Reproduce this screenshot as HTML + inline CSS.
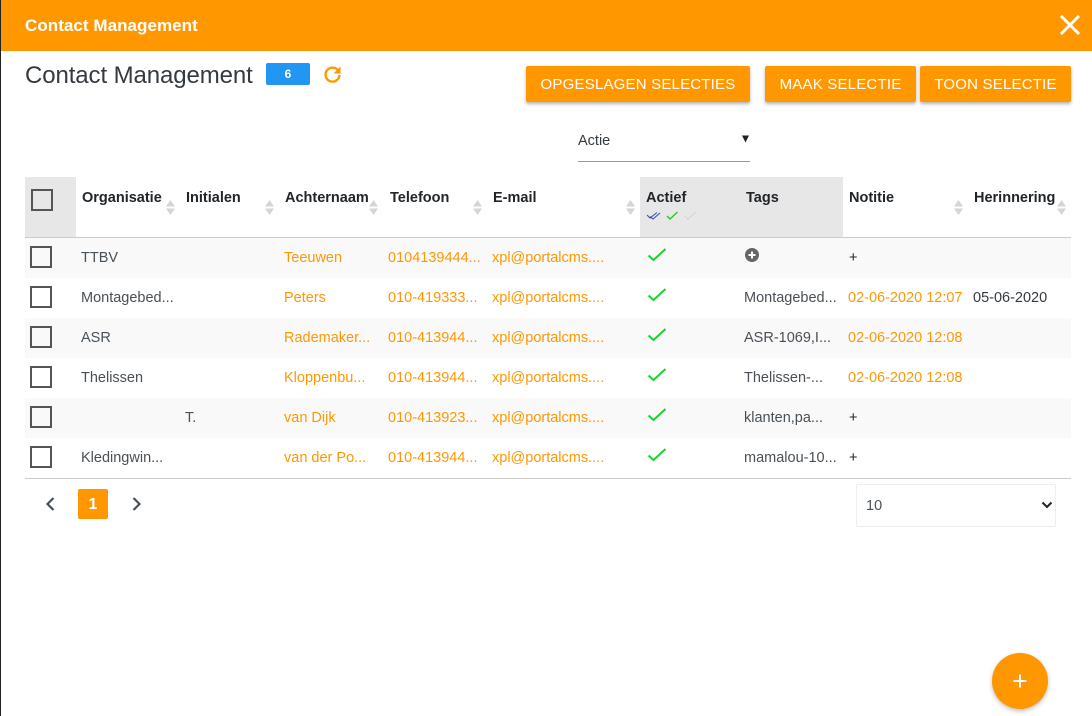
<!DOCTYPE html>
<html><head><meta charset="utf-8">
<style>
html,body{margin:0;padding:0;background:#fff}
body{width:1092px;height:716px;overflow:hidden;position:relative;font-family:"Liberation Sans",sans-serif;color:#495057;font-size:14.5px}
.a{position:absolute;white-space:nowrap}
.bar{left:1px;top:0;width:1091px;height:51px;background:#ff9800}
.strip{left:0;top:0;width:1px;height:716px;background:#222}
.btn{background:#ff9800;color:#fff;height:36px;line-height:38px;border-radius:2px;text-align:center;font-size:15px;letter-spacing:.2px;box-shadow:0 2px 3px rgba(0,0,0,.3)}
.th{font-weight:bold;color:#212529;line-height:20px;top:188px;font-size:14.5px}
.td{line-height:20px;font-size:14.5px;color:#495057}
.o{color:#ff9800}
.row{left:25px;width:1046px;height:40px}
.cb{width:18px;height:18px;border:2px solid #555;left:30px;box-sizing:content-box;background:transparent}
.sort{width:9px;height:15px}
</style></head><body>
<div class="a strip"></div>
<div class="a bar"></div>
<div class="a" style="left:25px;top:16px;line-height:20px;color:#fff;font-size:17px;font-weight:bold;letter-spacing:.05px">Contact Management</div>
<svg class="a" style="left:1058px;top:13px" width="24" height="24" viewBox="0 0 24 24"><path d="M3 3L21 21M21 3L3 21" stroke="#fff" stroke-width="3" fill="none"/></svg>

<div class="a" style="left:25px;top:62px;line-height:28px;font-size:24px;letter-spacing:-.1px;color:#343a40">Contact Management</div>
<div class="a" style="left:266px;top:63px;width:44px;height:22px;background:#2196f3;border-radius:2px;color:#fff;font-size:12px;font-weight:bold;text-align:center;line-height:22px">6</div>
<svg class="a" style="left:322px;top:64px" width="21" height="21" viewBox="0 0 21 21"><path d="M16.6 7.2A7 7 0 1 0 17.5 11" stroke="#ff9800" stroke-width="2.4" fill="none"/><path d="M18.5 2.5V9.5H11.5Z" fill="#ff9800"/></svg>

<div class="a btn" style="left:526px;top:66px;width:224px">OPGESLAGEN SELECTIES</div>
<div class="a btn" style="left:765px;top:66px;width:151px">MAAK SELECTIE</div>
<div class="a btn" style="left:920px;top:66px;width:151px">TOON SELECTIE</div>

<div class="a td" style="left:578px;top:131px;color:#343a40">Actie</div>
<svg class="a" style="left:741px;top:135px" width="9" height="8"><path d="M1 0.5H8L4.5 7.5Z" fill="#222"/></svg>
<div class="a" style="left:578px;top:161px;width:172px;height:1px;background:#999"></div>

<div class="a" style="left:25px;top:177px;width:51px;height:60px;background:#e7e7e7"></div>
<div class="a" style="left:640px;top:177px;width:203px;height:60px;background:#e7e7e7"></div>
<div class="a" style="left:25px;top:237px;width:1046px;height:1px;background:#ccc"></div>
<div class="a" style="left:25px;top:478px;width:1046px;height:1px;background:#ccc"></div>
<div class="a row" style="top:238px;background:#f9f9f9"></div>
<div class="a row" style="top:318px;background:#f9f9f9"></div>
<div class="a row" style="top:398px;background:#f9f9f9"></div>

<div class="a cb" style="left:31px;top:189px"></div>
<div class="a th" style="left:82px">Organisatie</div>
<div class="a th" style="left:186px">Initialen</div>
<div class="a th" style="left:285px">Achternaam</div>
<div class="a th" style="left:390px">Telefoon</div>
<div class="a th" style="left:493px">E-mail</div>
<div class="a th" style="left:646px">Actief</div>
<div class="a th" style="left:746px">Tags</div>
<div class="a th" style="left:849px">Notitie</div>
<div class="a th" style="left:974px">Herinnering</div>

<svg class="a sort" style="left:166px;top:200px" viewBox="0 0 9 15"><path d="M4.5 0L9 6.5H0ZM0 8.5H9L4.5 15Z" fill="#d5d5d5"/></svg>
<svg class="a sort" style="left:265px;top:200px" viewBox="0 0 9 15"><path d="M4.5 0L9 6.5H0ZM0 8.5H9L4.5 15Z" fill="#d5d5d5"/></svg>
<svg class="a sort" style="left:369px;top:200px" viewBox="0 0 9 15"><path d="M4.5 0L9 6.5H0ZM0 8.5H9L4.5 15Z" fill="#d5d5d5"/></svg>
<svg class="a sort" style="left:473px;top:200px" viewBox="0 0 9 15"><path d="M4.5 0L9 6.5H0ZM0 8.5H9L4.5 15Z" fill="#d5d5d5"/></svg>
<svg class="a sort" style="left:626px;top:200px" viewBox="0 0 9 15"><path d="M4.5 0L9 6.5H0ZM0 8.5H9L4.5 15Z" fill="#d5d5d5"/></svg>
<svg class="a sort" style="left:954px;top:200px" viewBox="0 0 9 15"><path d="M4.5 0L9 6.5H0ZM0 8.5H9L4.5 15Z" fill="#d5d5d5"/></svg>
<svg class="a sort" style="left:1057px;top:200px" viewBox="0 0 9 15"><path d="M4.5 0L9 6.5H0ZM0 8.5H9L4.5 15Z" fill="#d5d5d5"/></svg>

<svg class="a" style="left:646px;top:210px" width="52" height="12" viewBox="0 0 52 12">
<path d="M1 5L4 8L11 2.500M4 6.500L7 9L14 3" stroke="#3f51b5" stroke-width="1.100" fill="none"/>
<path d="M21 6L24 9L31.500 2" stroke="#22cc22" stroke-width="1.400" fill="none"/>
<path d="M39 6L42 9L50 2" stroke="#d8d8d8" stroke-width="1.400" fill="none"/></svg>

<div class="a cb" style="top:246px"></div>
<div class="a cb" style="top:286px"></div>
<div class="a cb" style="top:326px"></div>
<div class="a cb" style="top:366px"></div>
<div class="a cb" style="top:406px"></div>
<div class="a cb" style="top:446px"></div>

<div class="a td" style="left:81px;top:247.500px">TTBV</div>
<div class="a td" style="left:81px;top:287.500px">Montagebed...</div>
<div class="a td" style="left:81px;top:327.500px">ASR</div>
<div class="a td" style="left:81px;top:367.500px">Thelissen</div>
<div class="a td" style="left:185px;top:407.500px">T.</div>
<div class="a td" style="left:81px;top:447.500px">Kledingwin...</div>

<div class="a td o" style="left:284px;top:247.500px">Teeuwen</div>
<div class="a td o" style="left:284px;top:287.500px">Peters</div>
<div class="a td o" style="left:284px;top:327.500px">Rademaker...</div>
<div class="a td o" style="left:284px;top:367.500px">Kloppenbu...</div>
<div class="a td o" style="left:284px;top:407.500px">van Dijk</div>
<div class="a td o" style="left:284px;top:447.500px">van der Po...</div>

<div class="a td o" style="left:388px;top:247.500px">0104139444...</div>
<div class="a td o" style="left:388px;top:287.500px">010-419333...</div>
<div class="a td o" style="left:388px;top:327.500px">010-413944...</div>
<div class="a td o" style="left:388px;top:367.500px">010-413944...</div>
<div class="a td o" style="left:388px;top:407.500px">010-413923...</div>
<div class="a td o" style="left:388px;top:447.500px">010-413944...</div>

<div class="a td o" style="left:492px;top:247.500px">xpl@portalcms....</div>
<div class="a td o" style="left:492px;top:287.500px">xpl@portalcms....</div>
<div class="a td o" style="left:492px;top:327.500px">xpl@portalcms....</div>
<div class="a td o" style="left:492px;top:367.500px">xpl@portalcms....</div>
<div class="a td o" style="left:492px;top:407.500px">xpl@portalcms....</div>
<div class="a td o" style="left:492px;top:447.500px">xpl@portalcms....</div>

<svg class="a" style="left:647px;top:248px" width="20" height="14"><path d="M1.500 7.500L6.500 12L18.500 1" stroke="#1fd12f" stroke-width="2" fill="none"/></svg>
<svg class="a" style="left:647px;top:288px" width="20" height="14"><path d="M1.500 7.500L6.500 12L18.500 1" stroke="#1fd12f" stroke-width="2" fill="none"/></svg>
<svg class="a" style="left:647px;top:328px" width="20" height="14"><path d="M1.500 7.500L6.500 12L18.500 1" stroke="#1fd12f" stroke-width="2" fill="none"/></svg>
<svg class="a" style="left:647px;top:368px" width="20" height="14"><path d="M1.500 7.500L6.500 12L18.500 1" stroke="#1fd12f" stroke-width="2" fill="none"/></svg>
<svg class="a" style="left:647px;top:408px" width="20" height="14"><path d="M1.500 7.500L6.500 12L18.500 1" stroke="#1fd12f" stroke-width="2" fill="none"/></svg>
<svg class="a" style="left:647px;top:448px" width="20" height="14"><path d="M1.500 7.500L6.500 12L18.500 1" stroke="#1fd12f" stroke-width="2" fill="none"/></svg>

<svg class="a" style="left:745px;top:248px" width="14" height="14"><circle cx="7" cy="7" r="7" fill="#666"/><path d="M3.500 7H10.500M7 3.500V10.500" stroke="#fff" stroke-width="2"/></svg>
<div class="a td" style="left:744px;top:287.500px">Montagebed...</div>
<div class="a td" style="left:744px;top:327.500px">ASR-1069,I...</div>
<div class="a td" style="left:744px;top:367.500px">Thelissen-...</div>
<div class="a td" style="left:744px;top:407.500px">klanten,pa...</div>
<div class="a td" style="left:744px;top:447.500px">mamalou-10...</div>

<div class="a td" style="left:849px;top:248px;color:#212529">+</div>
<div class="a td o" style="left:848px;top:287.500px">02-06-2020 12:07</div>
<div class="a td o" style="left:848px;top:327.500px">02-06-2020 12:08</div>
<div class="a td o" style="left:848px;top:367.500px">02-06-2020 12:08</div>
<div class="a td" style="left:849px;top:408px;color:#212529">+</div>
<div class="a td" style="left:849px;top:448px;color:#212529">+</div>
<div class="a td" style="left:973px;top:287.500px;color:#343a40">05-06-2020</div>

<svg class="a" style="left:44px;top:496px" width="12" height="16"><path d="M9.500 2L3.500 8L9.500 14" stroke="#495057" stroke-width="2.200" fill="none"/></svg>
<div class="a" style="left:78px;top:489px;width:30px;height:30px;background:#ff9800;border-radius:2px;color:#fff;text-align:center;line-height:32px;font-size:16px;font-weight:bold">1</div>
<svg class="a" style="left:131px;top:496px" width="12" height="16"><path d="M2.500 2L8.500 8L2.500 14" stroke="#495057" stroke-width="2.200" fill="none"/></svg>

<div class="a" style="left:856px;top:484px;width:198px;height:41px;border:1px solid #eee;border-radius:2px"></div>
<div class="a td" style="left:866px;top:496px;color:#495057">10</div>
<svg class="a" style="left:1041px;top:501px" width="12" height="8"><path d="M1.500 1.500L6 6L10.500 1.500" stroke="#222" stroke-width="2" fill="none"/></svg>

<div class="a" style="left:992px;top:653px;width:56px;height:56px;border-radius:50%;background:#ff9800;box-shadow:0 2px 5px rgba(0,0,0,.25)"></div>
<svg class="a" style="left:1012px;top:673px" width="16" height="16"><path d="M8 1.500V14.500M1.500 8H14.500" stroke="#fff" stroke-width="2"/></svg>
</body></html>
